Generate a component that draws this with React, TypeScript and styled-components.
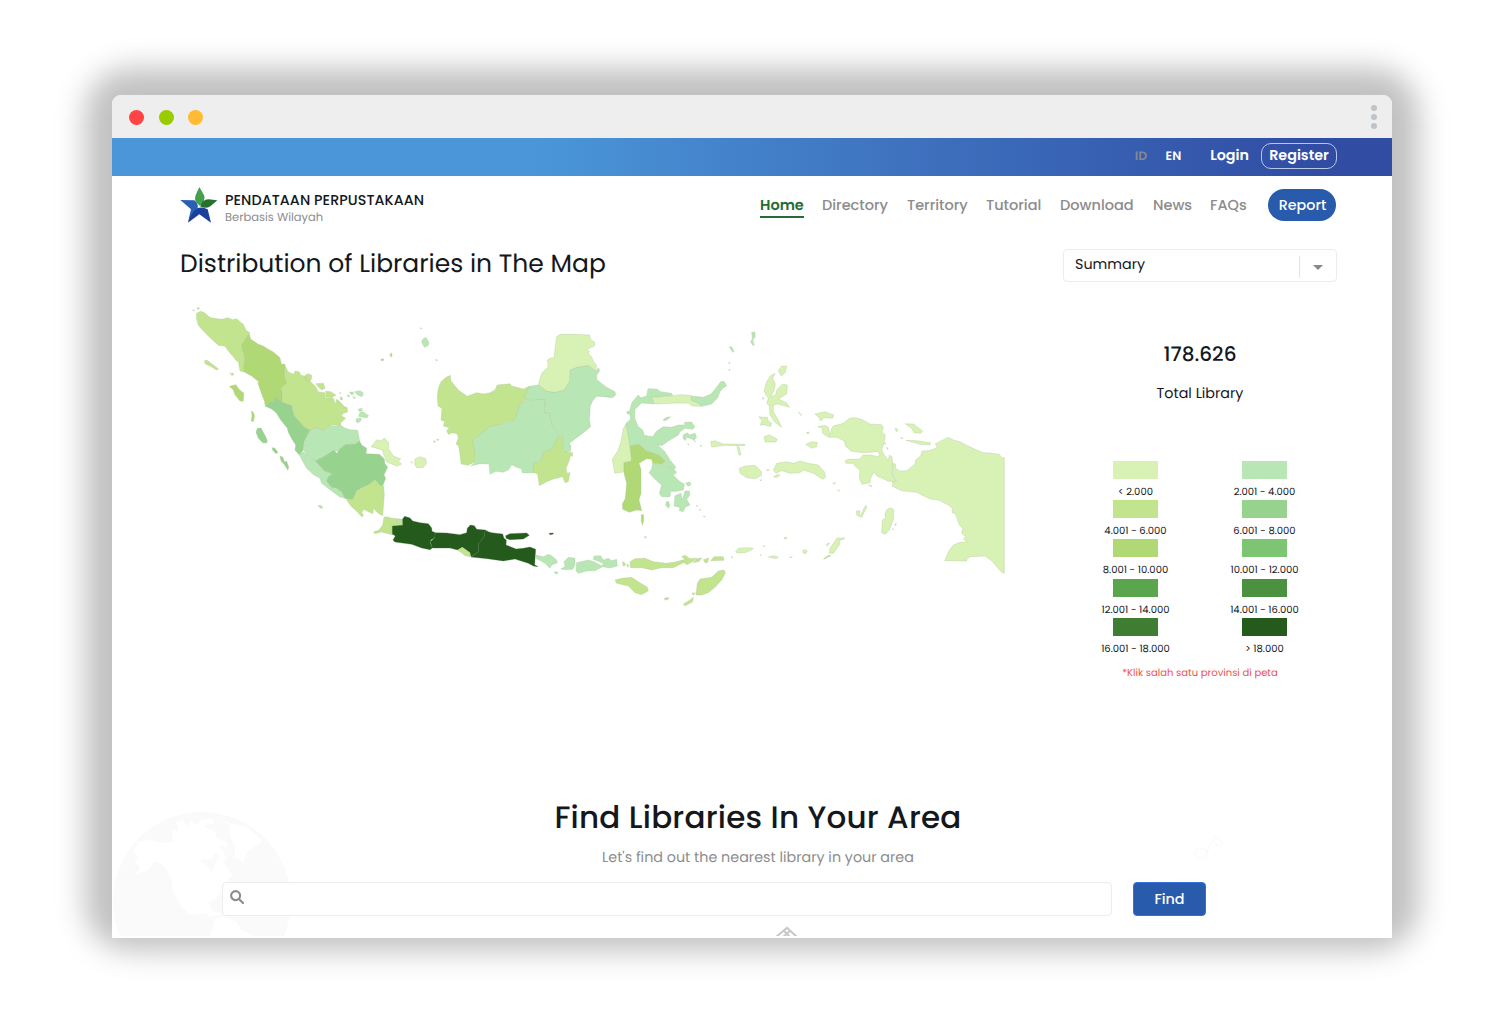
import React from "react";
import styled, { createGlobalStyle } from "styled-components";

const Global = createGlobalStyle`
  * { box-sizing: border-box; }
  body { margin: 0; background: #fff; font-family: Poppins, Inter, sans-serif; color: #14171c; text-rendering: geometricPrecision; }
  a { color: inherit; text-decoration: none; }
`;

const Stage = styled.main`
  width: 1504px;
  height: 1018px;
  padding: 95px 112px 80px;
  overflow: hidden;
  isolation: isolate;
`;
const Window = styled.div`
  height: 843px;
  position: relative;
  display: flex;
  flex-direction: column;
  border-radius: 9px 9px 0 0;
  background: #fff;

  &::before {
    content: "";
    position: absolute;
    z-index: -1;
    inset: -27px -27px -13px;
    border-radius: 46px;
    background: rgba(0, 0, 0, 0.245);
    filter: blur(14.5px);
  }
`;
const TitleBar = styled.div`
  height: 43px;
  padding: 0 15px 0 17px;
  display: flex;
  justify-content: space-between;
  align-items: center;
  background: #eee;
  border-radius: 9px 9px 0 0;
`;
const Lights = styled.div`
  display: flex;
  gap: 14.7px;
  margin-top: 1px;
`;
const Light = styled.i<{ $color: string }>`
  width: 15px;
  height: 15px;
  border-radius: 50%;
  background: ${(p) => p.$color};
`;
const Kebab = styled.div`
  display: grid;
  gap: 3px;
`;
const Dot = styled.i`
  width: 6px;
  height: 6px;
  border-radius: 50%;
  background: #bdc3c7;
`;
const TopBar = styled.div`
  height: 38px;
  padding: 0 55px 2px 0;
  display: flex;
  justify-content: flex-end;
  align-items: center;
  color: #fff;
  background: linear-gradient(90deg, #4a96d9 0%, #4a96d9 33%, #3f74c1 60%, #304ca3 95%, #304ca3 100%);
`;
const Txt = styled.span<{ $size: number; $track?: number; $weight?: number; $color?: string }>`
  font-size: ${(p) => p.$size}px;
  letter-spacing: ${(p) => p.$track ?? 0}px;
  font-weight: ${(p) => p.$weight ?? 400};
  color: ${(p) => p.$color ?? "inherit"};
  line-height: 1.2;
  white-space: nowrap;
`;
const Lang = styled(Txt)`
  margin-right: 18.5px;
  padding-top: 3px;
`;
const Login = styled(Txt)`
  margin: 0 12px 0 10.5px;
  padding-top: 2px;
`;
const Register = styled.a`
  width: 76px;
  height: 26px;
  padding-top: 2px;
  display: grid;
  place-items: center;
  border: 1px solid #b9c6e6;
  border-radius: 10px;
`;
const Header = styled.header`
  height: 58px;
  padding: 0 56px 0 68px;
  display: flex;
  align-items: center;
  justify-content: space-between;
`;
const Brand = styled.div`
  display: flex;
  gap: 7px;
  align-items: center;
  padding-top: 1px;
`;
const BrandText = styled.div`
  display: grid;
  gap: 2px;
  padding-top: 8px;
`;
const Nav = styled.nav`
  display: flex;
  align-items: center;
  gap: 18px;
`;
const NavItem = styled.a<{ $width: number; $active?: boolean }>`
  width: ${(p) => p.$width}px;
  height: 26px;
  padding-top: 6px;
  font-size: 14.5px;
  font-weight: ${(p) => (p.$active ? 600 : 500)};
  color: ${(p) => (p.$active ? "#256d35" : "#8c8c8c")};
  border-bottom: 2px solid ${(p) => (p.$active ? "#256d35" : "transparent")};
  white-space: nowrap;
  line-height: 17px;
`;
const Report = styled.button`
  width: 68px;
  height: 32px;
  margin-left: 3px;
  padding: 0 0 0 1px;
  border: 0;
  border-radius: 16px;
  color: #fff;
  background: #295bac;
  font: 500 14.3px Poppins, Inter, sans-serif;
`;
const Overview = styled.section`
  height: 546px;
  padding: 15px 55px 0 68px;
  display: flex;
  justify-content: space-between;
`;
const MapPanel = styled.div`
  width: 840px;
`;
const Title = styled.h1`
  margin: 0;
  height: 36px;
  line-height: 30px;
  font-size: 25px;
  font-weight: 400;
`;
const MapSvg = styled.svg`
  display: block;
  margin-top: 15px;
`;
const Side = styled.aside`
  width: 274px;
  display: flex;
  flex-direction: column;
  align-items: center;
`;
const Select = styled.div`
  width: 274px;
  height: 33px;
  padding: 0 13px 0 11px;
  display: flex;
  align-items: center;
  border: 1px solid #ececec;
  border-radius: 4px;
`;
const SelectValue = styled(Txt)`
  padding-top: 1px;
`;
const Divider = styled.i`
  width: 1px;
  height: 22px;
  margin: 2px 13px 0 auto;
  background: #e4e4e4;
`;
const Caret = styled.i`
  margin: 4px 0 0;
  border: 5px solid transparent;
  border-top-color: #888;
  border-bottom: 0;
`;
const Total = styled.div`
  height: 179px;
  padding-top: 60px;
  display: flex;
  flex-direction: column;
  align-items: center;
  gap: 20px;
`;
const Legend = styled.div`
  width: 258px;
  display: grid;
  grid-template-columns: 129px 129px;
  grid-auto-rows: 39.2px;
`;
const LegendItem = styled.div`
  display: flex;
  flex-direction: column;
  align-items: center;
  gap: 7px;
`;
const Swatch = styled.i<{ $color: string }>`
  width: 45px;
  height: 18px;
  background: ${(p) => p.$color};
`;
const Note = styled(Txt)`
  margin-top: 10px;
`;
const Finder = styled.section`
  flex: 1;
  position: relative;
  overflow: hidden;
`;
const Backdrop = styled.svg`
  position: absolute;
  left: 0;
  top: 0;
`;
const FinderBody = styled.div`
  position: relative;
  display: flex;
  flex-direction: column;
  align-items: center;
  padding: 18px 0 0 12px;
`;
const FindTitle = styled.h2`
  margin: 0;
  font-size: 31px;
  line-height: 38px;
  font-weight: 500;
  letter-spacing: 0.2px;
`;
const FindSub = styled(Txt)`
  margin-top: 14px;
`;
const SearchRow = styled.form`
  align-self: flex-start;
  margin: 15px 0 0 98px;
  display: flex;
  gap: 21px;
`;
const SearchBox = styled.label`
  width: 890px;
  height: 34px;
  padding: 7px;
  border: 1px solid #ececee;
  border-radius: 4px;
  background: #fff;

  svg {
    display: block;
  }
`;
const FindButton = styled.button`
  width: 73px;
  height: 34px;
  padding: 0;
  border: 1px solid #3670dc;
  border-radius: 4px;
  color: #fff;
  background: #295bac;
  font: 500 14.3px Poppins, Inter, sans-serif;
`;

const C = {
  a: "#d8f1b4",
  b: "#b9e6b5",
  c: "#c3e48e",
  d: "#97d28f",
  e: "#b0d975",
  f: "#7dc473",
  g: "#5ba54e",
  h: "#4c9140",
  i: "#3f7e32",
  j: "#245a1c",
};

type Region = [string, string];
type Cluster = { x: number; y: number; regions: Region[] };

const clusters: Cluster[] = [
  {
    x: 180,
    y: 295,
    regions: [
      [C.c, "M50 55L62 49 75 54 85 64 95 69 125 73 145 68 158 74 170 71 181 81 190 88 198 106 209 113 208 122 198 124 184 148 188 165 194 186 191 230 180 228 175 200 168 196 160 185 148 172 135 154 115 151 100 137 85 123 65 103 55 90 49 70ZM73 197L82 196 96 207 116 222 109 225 92 214 76 207ZM149 233l4 3 6-2 2 6-6 1zM38 46l4-2 1 4zM51 39l5-2 2 5-5 1z"],
      [C.e, "M208 120L212 132 235 148 248 152 265 163 280 171 300 188 304 207 315 208 314 245 320 265 305 280 307 300 306 322 287 304 283 318 271 320 256 334 253 317 246 300 234 265 236 260 215 243 191 230 194 186 184 150 198 126ZM148 274L168 269 178 284 191 294 190 319 180 318 165 299 160 285ZM214 348l6 4 4 12-4 16-7-3 3-14z"],
      [C.c, "M313 208L324 230 340 238 346 228 358 231 362 240 374 244 392 260 407 275 414 290 434 293 435 308 460 310 465 324 480 320 492 334 502 338 502 352 490 355 484 362 497 370 482 383 482 391 460 390 443 395 432 406 410 398 390 406 372 396 342 362 340 341 336 333 306 322 307 280 320 265 313 245ZM376 240l10-4 10 6-3 13-10 4-8-9zM408 266L430 265 435 280 425 285 412 272ZM437 289L452 290 468 300 455 308 437 305ZM470 313l7 4-2 5-7-2zM481 306l5 1 2 7-7 0zM478 293l4 0-1 4z"],
      [C.d, "M256 334L271 320 283 318 287 304 306 322 322 328 336 333 342 362 372 396 390 406 372 440 370 465 358 480 345 466 347 450 335 431 325 412 322 400 300 372 290 355 275 342ZM232 400L243 399 254 419 262 436 260 444 248 443 235 430 228 412ZM276 458l8 1 10 13-6 4-10-10zM300 483L309 487 313 500 320 499 326 515 324 526 312 508 303 498Z"],
      [C.b, "M390 406L410 398 432 406 443 395 482 391 495 399 510 404 533 406 539 438 520 447 497 449 477 468 462 468 440 480 407 498 380 480 369 463 374 438Z"],
      [C.b, "M358 480L369 470 385 485 407 498 430 527 459 537 442 553 455 577 480 588 497 610 480 606 462 593 425 565 420 550 401 539 380 520ZM414 632l8-1 7 6-6 4zM500 303l7-4 2 6zM509 291l10 0 2 7-8 1zM523 290L540 287 550 294 546 305 533 300ZM518 304l8 4-3 4zM535 342l13-2-5 4 6 4-12 1zM540 352L551 352 566 362 560 369 536 364ZM528 372l14-3 2 6-9 9-6-3z"],
      [C.d, "M407 498L440 480 462 466 470 475 480 462 497 449 525 447 539 438 545 450 560 460 558 476 598 478 613 492 615 507 623 516 612 540 617 550 608 573 600 571 585 555 568 568 545 578 530 587 518 614 497 612 484 590 468 580 455 577 440 558 447 543 459 537 445 532 432 527Z"],
      [C.c, "M500 615L518 614 530 587 545 578 568 568 585 553 600 571 611 573 613 600 608 662 595 655 580 640 579 656 565 650 552 643 545 652 551 662 545 665 533 652 512 632Z"],
      [C.a, "M573 455L590 434 603 438 613 429 625 441 626 462 640 483 662 491 655 500 665 507 652 514 635 507 620 500 612 480 607 465Z"],
      [C.b, "M603 192l8 0-2 6-5-1zM630 177l6 0-1 9-4-2z"],
    ],
  },
  {
    x: 360,
    y: 310,
    regions: [
      [C.a, "M165 447L180 440 197 446 200 460 190 472 170 473 164 463ZM152 455l6 1-2 4z"],
      [C.c, "M40 666L57 660 68 645 72 622 82 620 92 624 110 626 109 645 97 648 99 675 65 666 45 671Z"],
      [C.c, "M110 626L128 628 126 648 116 648 110 645Z"],
      [C.b, "M188 88L197 82 207 97 204 107 193 112 185 97ZM226 149l6 0-1 5zM90 132l5-3 0 10zM63 148l8 0-3 5zM181 53l5 2-3 3z"],
      [C.c, "M221 392l6 2-4 4zM229 389l7-1-1 4z"],
      [C.c, "M235 235L243 215 258 202 271 196 273 212 282 224 295 240 322 259 350 248 370 252 390 248 405 240 412 225 450 221 455 228 490 237 508 229 508 235 495 255 497 270 478 285 470 318 460 333 435 337 420 343 390 350 345 385 338 395 345 425 345 455 325 466 303 462 300 434 296 408 288 402 295 385 292 372 278 368 265 373 260 362 268 353 250 348 254 335 243 330 246 295 234 288 232 262Z"],
      [C.b, "M497 272L530 268 556 268 553 305 568 310 578 350 597 373 582 410 570 420 550 427 545 450 520 463 521 488 488 489 484 476 470 472 455 464 445 480 428 487 408 484 390 493 387 462 360 461 333 468 347 455 345 425 338 395 345 385 390 350 420 343 460 333 470 318 478 285Z"],
      [C.b, "M508 229L535 225 560 243 585 247 612 240 628 215 630 180 650 172 685 166 707 182 716 173 719 183 710 195 710 208 722 218 740 232 765 245 767 255 758 263 730 260 710 259 698 272 690 290 690 310 688 330 692 350 670 368 650 383 628 400 633 408 631 424 612 427 607 380 597 373 578 350 568 308 553 308 556 268 497 270 495 255Z"],
      [C.a, "M590 80L600 73 640 73 688 75 692 88 705 98 703 108 680 118 688 124 685 132 695 140 700 154 710 166 707 182 685 166 650 172 630 180 628 215 612 240 585 247 560 243 535 225 545 190 565 170 562 150 570 145 582 143 587 100Z"],
      [C.c, "M597 375L607 380 610 425 638 428 637 438 628 440 630 447 625 458 618 475 622 491 630 487 625 515 615 518 608 500 580 507 560 515 538 527 533 493 520 487 520 463 545 450 550 427 570 420 582 405Z"],
      [C.j, "M128 627L134 619 150 624 158 633 180 638 205 641 215 654 216 664 226 668 224 683 212 690 211 700 217 714 210 719 185 714 155 703 105 696 99 690 106 678 97 672 97 648 128 646Z"],
      [C.j, "M226 668L260 669 300 674 320 668 322 655 331 645 343 647 350 658 376 660 372 682 356 700 355 725 333 740 330 728 307 712 293 720 270 714 217 714 211 695 224 683Z"],
      [C.j, "M376 660L385 665 395 668 428 672 432 685 439 690 438 705 468 717 490 715 510 711 527 718 524 764 534 770 520 768 505 760 465 747 430 753 382 746 333 741 355 725 356 700 372 682ZM437 677L450 671 500 669 508 676 490 687 450 689 438 685ZM567 670l14-1-3 4-8 1z"],
      [C.c, "M293 720L307 712 330 728 330 740 316 737Z"],
    ],
  },
  {
    x: 360,
    y: 500,
    regions: [
      [C.b, "M527 165L550 170 565 163 575 167 590 180 592 188 575 195 570 205 555 190 530 176ZM582 216l10-1 1 6-5 1zM602 207L615 200 612 185 625 172 645 175 645 195 638 208 615 209ZM650 188L685 180 702 185 725 198 730 190 700 178 702 168 722 167 730 180 745 175 755 182 770 178 772 198 750 204 728 200 705 212 680 213 655 220 648 212Z"],
      [C.c, "M810 185L825 176 855 175 880 185 920 190 950 185 975 178 970 188 940 203 905 203 875 210 845 203 812 203ZM788 185l5 2 4 9-8 2zM800 192l7 4-3 6zM965 170l10-4 15 10 20-2-10 10-20 10-10-8 8-6zM1000 188l10-12 16-2-8 10zM1030 179l17-5-5 14-6 1zM1052 182L1062 170 1090 170 1092 181ZM765 240L785 235 815 232 835 245 862 262 865 272 845 284 825 278 805 258 770 250ZM1012 250L1020 237 1055 232 1075 213 1092 210 1096 218 1085 240 1065 262 1045 278 1025 285 1008 285ZM970 312L990 300 1000 292 998 305 975 318ZM912 296l12-4 3 4-10 5zM995 280l10-2-4 8z"],
    ],
  },
  {
    x: 600,
    y: 320,
    regions: [
      [C.b, "M274 228L310 232 333 222 345 208 362 185 372 184 380 197 370 203 360 215 352 235 335 252 305 259 285 246 274 241ZM455 37L465 36 466 50 458 60 463 75 458 76 452 66 457 55ZM388 80l8 1 6 14-4 2zM385 128l5 0-1 4zM386 149l4 0-1 4z"],
      [C.b, "M78 310L92 298 88 275 95 250 105 236 115 225 122 233 140 228 144 206 170 207 182 215 215 220 218 226 155 233 163 252 125 249 105 268 104 295 115 320 128 330 133 346 158 350 170 333 190 320 215 322 235 315 255 315 253 307 275 306 284 320 278 328 255 325 240 335 235 345 205 363 185 377 172 374 195 395 210 420 228 442 222 448 187 430 195 420 180 408 138 393 117 373 90 378 78 335ZM80 275l7-1 1 8-6 0zM190 298l10-6 12-2-8 8-12 5zM250 345L262 338 268 345 285 340 290 352 282 360 288 366 275 356 260 352 256 362 249 355ZM263 371l4 1-2 3zM300 376l5 1-3 3z"],
      [C.a, "M155 232L215 228 240 224 274 226 274 241 295 250 305 259 275 258 268 250 230 249 165 252Z"],
      [C.a, "M78 312L70 325 64 360 55 390 37 418 44 460 70 456 72 428 95 423 90 378Z"],
      [C.e, "M90 378L117 373 138 393 160 400 180 408 195 422 185 432 158 430 155 418 140 416 117 430 123 448 123 520 117 540 125 572 110 570 88 577 68 568 67 552 76 535 80 490 72 460 72 428 95 423ZM124 584h7v18l-4 14-3-12zM133 650l6 0-2 5z"],
      [C.b, "M158 430L187 432 222 448 230 457 220 466 240 485 253 492 250 510 228 514 212 514 210 530 185 530 178 520 185 495 165 478 147 458 155 447ZM225 527L243 520 247 540 255 513 268 513 270 525 260 538 270 555 255 562 250 575 238 572 240 562 222 558ZM198 546l8-2 4 12-5 9-8-9zM257 489l13-3 3 8-9 5zM289 556l4 1-2 3zM298 568l4 1-2 3zM310 589l5 0-2 3z"],
      [C.a, "M525 160L513 166 500 185 492 212 498 225 505 235 500 250 508 258 510 285 525 307 545 322 535 300 520 275 520 255 535 252 568 262 560 248 535 237 560 222 562 195 548 192 530 210 527 225 512 230 522 212 526 192 518 175ZM535 152L545 138 560 139 556 158 543 168ZM476 290L490 292 502 292 505 303 515 310 512 320 492 314 480 316 486 302ZM492 350L508 344 532 358 528 366 495 366ZM332 365L345 362 370 372 435 373 434 377 375 376 335 381ZM411 378L418 382 423 404 417 406ZM418 445L435 438 465 436 485 455 484 467 465 476 440 473 420 460ZM520 450L530 430 560 425 580 430 600 423 625 430 655 435 673 455 677 472 668 478 640 460 610 450 600 458 570 460 545 452 528 460ZM520 470l14-7 6 3-12 7zM500 448l8 2-6 3zM487 232l5 3-3 4zM595 275l10 10-2 2zM620 338l6-1-2 4z"],
      [C.a, "M407 695L415 685 440 683 460 684 455 690 435 698 412 699ZM552 653l8-1-1 5-6 0zM490 677l5 0-2 4zM505 711l15-4 15 4-6 5zM609 691l9-2 4 7-7 6-6-4zM393 712l6-3-3 6zM569 711l8 0-4 3zM480 704l4 0-2 3zM672 717l10-10 10-1-14 8zM677 674l6 0 0 4zM480 480l5-1-3 4z"],
    ],
  },
  {
    x: 800,
    y: 390,
    regions: [
      [C.a, "M17 163L35 155 52 157 50 170 35 175ZM45 72L75 65 101 75 98 85 72 83 62 93 57 83ZM53 110L75 106 85 112 90 132 82 140 68 130 66 113ZM20 127l7-1-2 5zM315 101L340 102 368 123 362 130 342 128 335 115ZM318 151L350 152 392 158 390 165 360 163ZM285 116l6-1 3 6-5 4zM301 144l8-1-3 4zM259 173l5 0-1 6zM253 158l4 1-2 4z"],
      [C.a, "M95 115L100 108 130 100 148 85 165 83 185 88 210 102 245 104 250 112 246 125 256 135 252 160 245 178 250 190 265 212 268 195 276 200 278 220 276 255 290 275 262 273 250 266 230 258 222 245 212 265 210 278 186 283 178 265 180 240 165 228 160 220 138 220 135 212 145 208 178 208 190 195 215 195 232 200 240 195 233 185 190 188 155 184 138 170 132 152 110 142 85 142 92 130Z"],
      [C.a, "M278 220L286 222 288 236 300 243 320 242 345 222 347 210 362 198 366 183 385 182 400 178 412 172 406 161 445 142 460 150 480 155 500 166 525 178 550 188 570 189 598 193 605 203 613 203 613 550 605 547 575 512 555 498 512 500 500 507 500 513 434 512 445 485 460 465 480 457 503 456 490 448 497 440 485 430 488 415 478 405 470 382 465 370 457 368 457 355 445 345 415 330 390 327 370 317 350 307 305 302 277 289 278 275 290 273 278 255Z"],
      [C.a, "M262 357L275 353 281 360 280 390 268 420 255 433 245 428 247 390 256 385 255 370ZM284 402l5-1-2 7zM277 417l3-1-1 4zM198 346L200 352 185 382 180 380 190 358ZM169 363L180 362 178 380 170 375ZM88 490L90 475 110 445 133 443 132 448 120 450 118 465 100 490ZM70 508L85 496 92 498ZM82 460l7 0-3 4zM99 283l4-6 4 2zM205 285l10 2 0 4zM113 300l6 1-2 3z"],
    ],
  },
];

const IndonesiaMap = () => (
  <MapSvg width="840" height="320" viewBox="180 300 840 320">
    {clusters.map((c, i) => (
      <g key={i} transform={`translate(${c.x} ${c.y}) scale(.33333)`} strokeWidth="2" strokeLinejoin="round">
        {c.regions.map(([fill, d], k) => (
          <path key={k} fill={fill} stroke={fill === C.j ? "#3d6b36" : "#a3c08f"} strokeOpacity=".45" d={d} />
        ))}
      </g>
    ))}
  </MapSvg>
);

const Logo = () => (
  <svg width="38" height="36" viewBox="0 0 112 108">
    <path d="M57 0L46 24Q42 38 47 45L58 56Q76 42 72 26Z" fill="#43a04d" />
    <path d="M59 58Q66 38 84 37L111 40 90 58Q76 67 59 58Z" fill="#26702f" />
    <path d="M0 39L42 40Q55 50 52 63L23 106 32 67Z" fill="#2a60b4" />
    <path d="M52 63Q66 58 82 67L92 107 57 82 23 107Q32 77 52 63Z" fill="#1c419b" />
  </svg>
);

const legend = [
  [C.a, "< 2.000"],
  [C.b, "2.001 - 4.000"],
  [C.c, "4.001 - 6.000"],
  [C.d, "6.001 - 8.000"],
  [C.e, "8.001 - 10.000"],
  [C.f, "10.001 - 12.000"],
  [C.g, "12.001 - 14.000"],
  [C.h, "14.001 - 16.000"],
  [C.i, "16.001 - 18.000"],
  [C.j, "> 18.000"],
];

const nav: [string, number][] = [
  ["Home", 44],
  ["Directory", 67],
  ["Territory", 61],
  ["Tutorial", 56],
  ["Download", 75],
  ["News", 39],
  ["FAQs", 37],
];

export default function App() {
  return (
    <Stage>
      <Global />
      <Window>
        <TitleBar>
          <Lights>
            <Light $color="#ff4444" />
            <Light $color="#99cc00" />
            <Light $color="#ffbb33" />
          </Lights>
          <Kebab>
            <Dot />
            <Dot />
            <Dot />
          </Kebab>
        </TitleBar>
        <TopBar>
          <Lang $size={12.3} $weight={600} $color="#85898f">ID</Lang>
          <Lang $size={12.3} $weight={600}>EN</Lang>
          <Login $size={14.3} $weight={600}>Login</Login>
          <Register>
            <Txt $size={14.3} $weight={600}>Register</Txt>
          </Register>
        </TopBar>
        <Header>
          <Brand>
            <Logo />
            <BrandText>
              <Txt $size={14.3} $weight={500} $track={0.06}>PENDATAAN PERPUSTAKAAN</Txt>
              <Txt $size={11.5} $color="#8c8c8c">Berbasis Wilayah</Txt>
            </BrandText>
          </Brand>
          <Nav>
            {nav.map(([label, width], i) => (
              <NavItem key={label} $width={width} $active={i === 0} href="#">{label}</NavItem>
            ))}
            <Report>Report</Report>
          </Nav>
        </Header>
        <Overview>
          <MapPanel>
            <Title>Distribution of Libraries in The Map</Title>
            <IndonesiaMap />
          </MapPanel>
          <Side>
            <Select>
              <SelectValue $size={14.3}>Summary</SelectValue>
              <Divider />
              <Caret />
            </Select>
            <Total>
              <Txt $size={20} $weight={500}>178.626</Txt>
              <Txt $size={14.3}>Total Library</Txt>
            </Total>
            <Legend>
              {legend.map(([color, label]) => (
                <LegendItem key={label}>
                  <Swatch $color={color} />
                  <Txt $size={10}>{label}</Txt>
                </LegendItem>
              ))}
            </Legend>
            <Note $size={10} $color="#f0524f">*Klik salah satu provinsi di peta</Note>
          </Side>
        </Overview>
        <Finder>
          <Backdrop width="1280" height="156" viewBox="112 780 1280 156">
            <circle cx="202" cy="901" r="89" fill="#fafafb" />
            <g transform="translate(100 790) scale(.33333)" fill="#fff">
              <path d="M115 155L150 150 185 160 220 157 215 120 235 122 228 95 250 90 262 112 270 92 290 105 300 90 335 83 343 100 310 108 345 125 350 145 380 155 383 175 360 165 375 195 383 215 345 190 335 207 297 210 325 230 335 250 345 222 355 200 370 205 378 230 398 255 380 275 365 305 345 330 325 335 340 365 370 370 360 375 330 380 315 370 270 375 240 345 218 305 215 265 190 225 165 213 145 240 105 253 120 232 103 215 115 200 100 185Z" />
              <path d="M358 90L390 100 440 110 488 155 440 185 430 218 405 200 405 170 390 140 388 105Z" />
              <path d="M345 385L370 380 410 395 420 415 460 440H330L338 410Z" />
            </g>
            <g fill="none" stroke="#fafafa" strokeWidth="1.4">
              <ellipse cx="1201" cy="853" rx="6" ry="5" />
              <path d="M1207 852L1214 836 1223 843 1219 847M1213 841L1218 846" />
            </g>
            <g fill="none" stroke="#c7c7c7" strokeWidth="2">
              <path d="M775.5 937.5L787 927.8 797.5 937.5M783.5 930.5L791 938M790.5 930.5L782 938" />
            </g>
          </Backdrop>
          <FinderBody>
            <FindTitle>Find Libraries In Your Area</FindTitle>
            <FindSub $size={14.3} $color="#8c8c8c">Let's find out the nearest library in your area</FindSub>
            <SearchRow>
              <SearchBox>
                <svg width="14" height="14" viewBox="0 0 14 14" fill="none" stroke="#8c8c8c" strokeWidth="2.1" strokeLinecap="round">
                  <circle cx="5.6" cy="5.6" r="4.5" />
                  <path d="M9.2 9.2L13 13" />
                </svg>
              </SearchBox>
              <FindButton type="button">Find</FindButton>
            </SearchRow>
          </FinderBody>
        </Finder>
      </Window>
    </Stage>
  );
}
